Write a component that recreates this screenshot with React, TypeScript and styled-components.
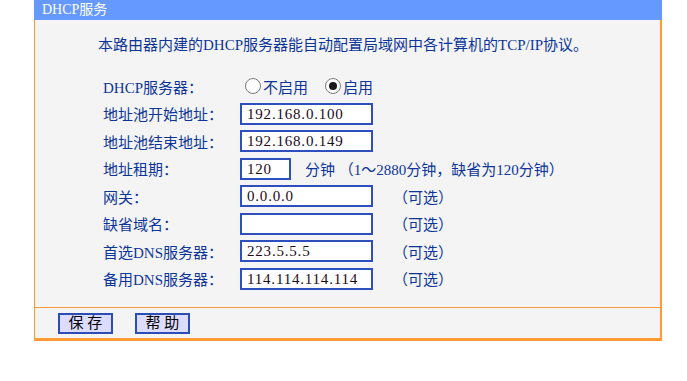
import React from 'react';
import styled, {createGlobalStyle} from "styled-components";

const font = `"Liberation Serif", "Noto Sans CJK SC", serif`;

interface Field {
  label: string;
  value: string;
  short?: boolean;
  note?: string;
}

const fields: Field[] = [
  {label: '地址池开始地址：', value: '192.168.0.100'},
  {label: '地址池结束地址：', value: '192.168.0.149'},
  {label: '地址租期：', value: '120', short: true, note: '分钟 （1～2880分钟，缺省为120分钟）'},
  {label: '网关：', value: '0.0.0.0', note: '（可选）'},
  {label: '缺省域名：', value: '', note: '（可选）'},
  {label: '首选DNS服务器：', value: '223.5.5.5', note: '（可选）'},
  {label: '备用DNS服务器：', value: '114.114.114.114', note: '（可选）'},
];

const App = () => {
  return (
    <>
      <GlobalStyle/>
      <Panel>
        <Header>DHCP服务</Header>
        <Body>
          <Intro>本路由器内建的DHCP服务器能自动配置局域网中各计算机的TCP/IP协议。</Intro>
          <Form>
            <Label>DHCP服务器：</Label>
            <Control>
              <RadioOption>
                <Radio/>
                不启用
              </RadioOption>
              <RadioOption>
                <Radio checked/>
                启用
              </RadioOption>
            </Control>
            {fields.map(f => (
              <React.Fragment key={f.label}>
                <Label>{f.label}</Label>
                <Control>
                  <Input short={f.short}>{f.value}</Input>
                  {f.note && <Note short={f.short}>{f.note}</Note>}
                </Control>
              </React.Fragment>
            ))}
          </Form>
        </Body>
        <Footer>
          <Button>保 存</Button>
          <Button>帮 助</Button>
        </Footer>
      </Panel>
    </>
  );
};

const GlobalStyle = createGlobalStyle`
  body {
    margin: 0;
    background: #ffffff;
    font-family: ${font};
  }
`;
const Panel = styled.div`
  margin-left: 34px;
  width: 628px;
  font-family: ${font};
  font-size: 15px;
`;
const Header = styled.div`
  height: 20px;
  line-height: 20px;
  background: #6699ff;
  color: #ffffff;
  padding-left: 8px;
  font-size: 14px;
`;
const Body = styled.div`
  background: #f4f4f4;
  border-left: 1px solid #ff9933;
  border-right: 2px solid #ff9933;
  padding: 15px 0 17px 0;
`;
const Intro = styled.div`
  padding-left: 63px;
  line-height: 20px;
  color: #0d3499;
`;
const Form = styled.div`
  display: grid;
  grid-template-columns: 137px 1fr;
  grid-auto-rows: 22px;
  row-gap: 5.5px;
  margin-top: 20px;
  padding-left: 68px;
`;
const Label = styled.div`
  display: flex;
  align-items: center;
  color: #0d3499;
`;
const Control = styled.div`
  display: flex;
  align-items: center;
  color: #0d3499;
`;
const RadioOption = styled.label`
  display: flex;
  align-items: center;
  margin-left: 5px;
  margin-right: 12px;
`;
const Radio = styled.span<{ checked?: boolean }>`
  box-sizing: border-box;
  width: 16px;
  height: 16px;
  border-radius: 50%;
  border: 1px solid #7a7a7a;
  background: #ffffff;
  margin-right: 2px;
  display: flex;
  align-items: center;
  justify-content: center;
  &::after {
    content: "";
    display: ${p => (p.checked ? 'block' : 'none')};
    width: 8px;
    height: 8px;
    border-radius: 50%;
    background: #1a1a1a;
  }
`;
const Input = styled.div<{ short?: boolean }>`
  box-sizing: border-box;
  width: ${p => (p.short ? '51px' : '133px')};
  height: 22px;
  line-height: 18px;
  border: 2px solid #2e4fbf;
  background: #ffffff;
  color: #1a0a1a;
  padding-left: 5px;
  letter-spacing: 0.8px;
  white-space: nowrap;
`;
const Note = styled.span<{ short?: boolean }>`
  margin-left: ${p => (p.short ? '14px' : '20px')};
  white-space: nowrap;
`;
const Footer = styled.div`
  display: flex;
  gap: 22px;
  background: #f4f4f4;
  border: 1px solid #ff9933;
  border-width: 1px 2px 3px 1px;
  padding: 5px 0 4px 23px;
`;
const Button = styled.button`
  box-sizing: border-box;
  width: 55px;
  height: 21px;
  padding: 0;
  background: #dcdcff;
  border: 2px solid #2a4db8;
  color: #000000;
  font-family: ${font};
  font-size: 15px;
  line-height: 17px;
`;

export default App;
